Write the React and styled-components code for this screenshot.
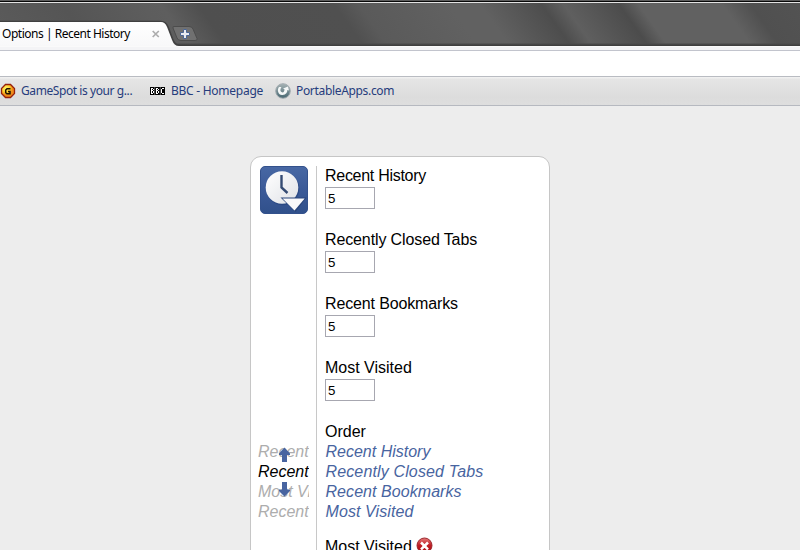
import React from "react";
import styled, { createGlobalStyle } from "styled-components";

const GlobalStyle = createGlobalStyle`
  * { box-sizing: border-box; }
  html, body { margin: 0; height: 550px; overflow: hidden; background: #ededed; }
`;

const Window = styled.div`
  display: flex;
  flex-direction: column;
  width: 800px;
  height: 550px;
  overflow: hidden;
  background: #ededed;
  font-family: "Liberation Sans", Arial, sans-serif;
  color: #000;
`;

const TitleBar = styled.header`
  height: 46px;
  flex: none;
  display: flex;
  align-items: flex-end;
  background:
    linear-gradient(#5c5c5c 0 1px, #080808 1px 2px, #e2e2e2 2px 3px, transparent 3px 43px, #4a4a4a 44px, #3b3b3b 46px),
    linear-gradient(54.5deg, #5b5b5b 0, #555 75px, #5d5d5d 140px, #5e5e5e 155px, #4f4f4f 185px, #505050 296px, #5a5a5a 316px, #616161 390px, #616161 415px, #4d4d4d 465px, #5f5f5f 483px, #4c4c4c 528px, #616161 544px, #616161 612px, #505050 635px, #535353 680px);
`;

const TabShape = styled.svg`
  display: block;
  flex: none;
  width: 200px;
  height: 26px;
`;

const TabStrip = styled.div`
  display: grid;
  width: 200px;
  height: 26px;
  & > * { grid-area: 1 / 1; }
`;

const TabLabel = styled.span`
  font: 12px/26px "Noto Sans", sans-serif;
  padding: 1px 0 0 2px;
  letter-spacing: -0.48px;
  white-space: nowrap;
`;

const Toolbar = styled.div`
  height: 31px;
  flex: none;
  background: linear-gradient(#fafafa 0 1px, #f4f4f6 1px 4px, #c2c4cd 4px 5px, #fff 5px 30px, #b9bcc2 30px 31px);
`;

const Bookmarks = styled.nav`
  height: 29px;
  flex: none;
  display: flex;
  align-items: flex-start;
  border-bottom: 1px solid #b6b9c0;
  background: linear-gradient(#f0f0f0 0 1px, #e5e5e5 2px, #dcdcdc 20px, #dedede);
`;

const Bookmark = styled.a`
  display: flex;
  flex: none;
  align-items: center;
  height: 27px;
  gap: ${(p) => p.$gap}px;
  width: ${(p) => p.$width}px;
  color: #263c7c;
  font: 12px/27px "Noto Sans", sans-serif;
  letter-spacing: ${(p) => p.$tracking}px;
  white-space: nowrap;
  svg { flex: none; display: block; }
`;

const Card = styled.main`
  display: flex;
  flex: none;
  width: 300px;
  height: 440px;
  margin: 50px 0 0 250px;
  padding: 9px 0 0 6px;
  border: 1px solid #c6c6c6;
  border-radius: 11px;
  background: #fff;
`;

const Side = styled.aside`
  width: 60px;
  flex: none;
  border-right: 1px solid #c8c8c8;
`;

const AppIcon = styled.svg`
  display: block;
  margin-left: 3px;
`;

const Previews = styled.div`
  display: grid;
  width: 52px;
  margin-top: 228px;
  & > * { grid-area: 1 / 1; }
`;

const PreviewList = styled.ul`
  list-style: none;
  margin: 0;
  padding: 0 0 0 1px;
  overflow: hidden;
`;

const Preview = styled.li`
  font-size: 16px;
  line-height: 20px;
  font-style: italic;
  white-space: nowrap;
  color: ${(p) => (p.$active ? "#000" : "#adadad")};
`;

const Form = styled.section`
  padding-left: 8px;
  font-size: 16px;
  line-height: 20px;
`;

const Field = styled.label`
  display: block;
  height: 64px;
  letter-spacing: ${(p) => p.$tracking}px;
`;

const NumberBox = styled.input`
  display: block;
  width: 50px;
  height: 22px;
  margin-top: 1px;
  padding: 0 2px;
  border: 1px solid #a7a7b0;
  border-radius: 0;
  outline: 0;
  background: #fff;
  color: #000;
  font: 13.3px "Liberation Sans", Arial, sans-serif;
`;

const OrderLink = styled.a`
  display: block;
  padding-left: 0.5px;
  color: #4864a0;
  font-style: italic;
  letter-spacing: ${(p) => p.$tracking}px;
`;

const BlockedTitle = styled.div`
  display: flex;
  gap: 4px;
  margin-top: 15px;
`;

const fields = [
  { name: "Recent History", tracking: -0.28, linkTracking: 0 },
  { name: "Recently Closed Tabs", tracking: -0.12, linkTracking: 0.14 },
  { name: "Recent Bookmarks", tracking: -0.14, linkTracking: 0.06 },
  { name: "Most Visited", tracking: 0, linkTracking: 0.1 },
];
const previews = ["Recent", "Recent", "Most Visited", "Recent"];

export default function App() {
  return (
    <>
      <GlobalStyle />
      <Window>
        <TitleBar>
          <TabStrip>
            <TabShape viewBox="0 0 200 26">
              <defs>
                <linearGradient id="tab" x2="0" y2="1">
                  <stop stopColor="#fff" />
                  <stop offset="1" stopColor="#f8f8f9" />
                </linearGradient>
              </defs>
              <path d="M0 1.500H161C165 1.500 167 4 168.500 8L172.500 19Q175 25.500 180 25.500" fill="none" stroke="#404040" strokeWidth="1.500" />
              <path d="M0 2H161Q165 2 167 7L172 20Q174 26 179 26H0Z" fill="url(#tab)" />
              <path d="M152.700 11 158.800 17M158.800 11 152.700 17" stroke="#adadad" strokeWidth="1.700" />
              <path d="M174 6.500H189Q192 6.500 193 9L197 18.500Q198 20.500 195 20.500H181Q178 20.500 177 18L173 8Q172.500 6.500 174 6.500Z" fill="#707070" stroke="#4c4c4c" />
              <path d="M183.500 9.500H186.500V12.500H189.500V15.500H186.500V18.500H183.500V15.500H180.500V12.500H183.500Z" fill="#e8eaf0" stroke="#4a6594" />
            </TabShape>
            <TabLabel>Options | Recent History</TabLabel>
          </TabStrip>
        </TitleBar>
        <Toolbar />
        <Bookmarks>
          <Bookmark $gap={5} $width={149} $tracking={-0.42}>
            <svg width="16" height="16" viewBox="0 0 16 16">
              <defs>
                <radialGradient id="gold" cx="35%" cy="30%">
                  <stop stopColor="#fff56a" />
                  <stop offset=".6" stopColor="#ffd02c" />
                  <stop offset="1" stopColor="#f08a18" />
                </radialGradient>
              </defs>
              <path d="M5.500 1.500H10.500L14.500 5.500V10.500L10.500 14.500H5.500L1.500 10.500V5.500Z" fill="url(#gold)" stroke="#96200c" strokeWidth="1.300" />
              <path d="M10.500 5.700H7L5.700 7V9.700L6.900 10.800H10V8.500H8" fill="none" stroke="#211400" strokeWidth="1.500" />
            </svg>
            GameSpot is your g...
          </Bookmark>
          <Bookmark $gap={5} $width={126} $tracking={-0.26}>
            <svg width="17" height="8" viewBox="0 0 17 8">
              <path d="M1 0H16V8H1Z" fill="#000" />
              <path d="M5.700 0V8M11.300 0V8" stroke="#b8b8b8" strokeWidth=".5" />
              <path d="M2 1H4V2H5V3H4V4H5V6H4V7H2ZM3 2V3H4V2ZM3 4V6H4V4ZM7 1H9V2H10V3H9V4H10V6H9V7H7ZM8 2V3H9V2ZM8 4V6H9V4ZM13 1H15V2H13ZM12 2H13V6H12ZM13 6H15V7H13Z" fill="#fff" fillRule="evenodd" shapeRendering="crispEdges" />
            </svg>
            BBC - Homepage
          </Bookmark>
          <Bookmark $gap={5} $width={150} $tracking={-0.33}>
            <svg width="16" height="16" viewBox="0 0 16 16">
              <defs>
                <linearGradient id="orb" x2="0" y2="1">
                  <stop stopColor="#a7b3b5" />
                  <stop offset="1" stopColor="#456670" />
                </linearGradient>
              </defs>
              <circle cx="8" cy="8" r="7.300" fill="url(#orb)" stroke="#a2abb0" />
              <path d="M4 4C1.500 7 3.500 12.500 7.500 12C11 11.600 12.500 9.500 12.300 7L14 7.500L13 3.500L8 5.500L9.500 6.300C9.500 9 8 10 6.500 9C4.700 8 5.500 5.500 6.500 4Z" fill="#f5f8f8" />
            </svg>
            PortableApps.com
          </Bookmark>
        </Bookmarks>
        <Card>
          <Side>
            <AppIcon width="48" height="48" viewBox="0 0 48 48">
              <defs>
                <linearGradient id="blue" x2="0" y2="1">
                  <stop stopColor="#4868a4" />
                  <stop offset=".5" stopColor="#3b5a98" />
                  <stop offset="1" stopColor="#30508b" />
                </linearGradient>
                <linearGradient id="face" x2="1" y2="1">
                  <stop stopColor="#fff" />
                  <stop offset="1" stopColor="#dfe1e6" />
                </linearGradient>
              </defs>
              <rect x=".5" y=".5" width="47" height="47" rx="4.500" fill="url(#blue)" stroke="#33518c" />
              <circle cx="22.700" cy="22.500" r="16.700" fill="#27457f" opacity=".7" />
              <circle cx="22" cy="21.500" r="16.300" fill="url(#face)" />
              <path d="M21.500 9V21.500L27.500 27" fill="none" stroke="#354b73" strokeWidth="2.400" />
              <path d="M20.500 31.500H46.500L35.500 46Z" fill="#29457b" />
              <path d="M22.500 32.500H44.700L34.500 44.500Z" fill="#f9f9fb" />
            </AppIcon>
            <Previews>
              <PreviewList>
                {previews.map((text, i) => (
                  <Preview key={i} $active={i === 1}>{text}</Preview>
                ))}
              </PreviewList>
              <svg width="52" height="80" viewBox="0 0 52 80">
                <path d="M27.500 5.500 33 11.500V13H30V20H25V13H22V11.500ZM25 40H30V47.500H33V49L27.500 54.500 22 49V47.500H25Z" fill="#4864a0" />
              </svg>
            </Previews>
          </Side>
          <Form>
            {fields.map(({ name, tracking }) => (
              <Field key={name} $tracking={tracking}>
                {name}
                <NumberBox defaultValue="5" />
              </Field>
            ))}
            <div>Order</div>
            {fields.map(({ name, linkTracking }) => (
              <OrderLink key={name} $tracking={linkTracking}>{name}</OrderLink>
            ))}
            <BlockedTitle>
              Most Visited
              <svg width="17" height="17" viewBox="0 0 17 17">
                <defs>
                  <linearGradient id="red" x2="0" y2="1">
                    <stop stopColor="#e57979" />
                    <stop offset=".5" stopColor="#c01d23" />
                    <stop offset="1" stopColor="#a80c13" />
                  </linearGradient>
                </defs>
                <circle cx="8.500" cy="8.500" r="7.500" fill="url(#red)" stroke="#9c2b30" />
                <path d="M5 5.500 12 12.500M12 5.500 5 12.500" stroke="#fff" strokeWidth="2.500" />
              </svg>
            </BlockedTitle>
          </Form>
        </Card>
      </Window>
    </>
  );
}
